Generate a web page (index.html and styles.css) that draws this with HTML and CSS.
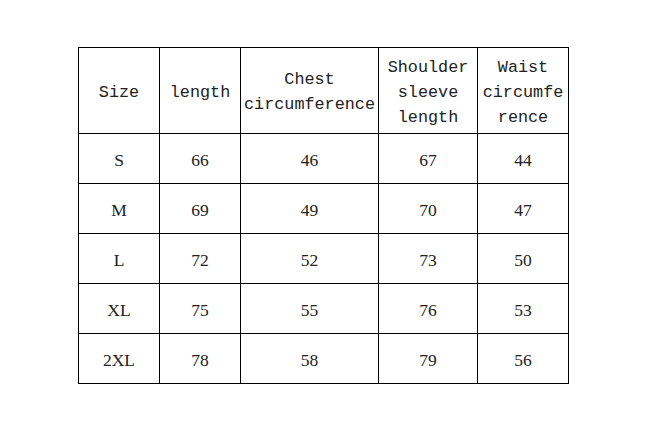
FILE: index.html
```html
<!DOCTYPE html>
<html>
<head>
<meta charset="utf-8">
<link rel="stylesheet" href="styles.css">
</head>
<body>
<table class="size-table">
  <colgroup>
    <col class="c1"><col class="c2"><col class="c3"><col class="c4"><col class="c5">
  </colgroup>
  <thead>
    <tr>
      <th>Size</th>
      <th>length</th>
      <th>Chest<br>circumference</th>
      <th>Shoulder<br>sleeve<br>length</th>
      <th>Waist<br>circumfe<br>rence</th>
    </tr>
  </thead>
  <tbody>
    <tr><td>S</td><td>66</td><td>46</td><td>67</td><td>44</td></tr>
    <tr><td>M</td><td>69</td><td>49</td><td>70</td><td>47</td></tr>
    <tr><td>L</td><td>72</td><td>52</td><td>73</td><td>50</td></tr>
    <tr><td>XL</td><td>75</td><td>55</td><td>76</td><td>53</td></tr>
    <tr><td>2XL</td><td>78</td><td>58</td><td>79</td><td>56</td></tr>
  </tbody>
</table>
</body>
</html>
```
FILE: styles.css
```css
html, body {
  margin: 0;
  background: #ffffff;
}
body {
  padding: 47px 0 0 78px;
}
.size-table {
  border-collapse: collapse;
  table-layout: fixed;
  width: 490px;
}
.c1 { width: 81px; }
.c2 { width: 81px; }
.c3 { width: 138px; }
.c4 { width: 99px; }
.c5 { width: 91px; }
.size-table th,
.size-table td {
  border: 1px solid #000;
  padding: 3px 0 0 0;
  text-align: center;
  vertical-align: middle;
  color: #222;
}
.size-table th {
  height: 82px;
  font-family: "Liberation Mono", monospace;
  font-weight: normal;
  font-size: 16.8px;
  line-height: 25px;
}
.size-table td {
  height: 46px;
  font-family: "Liberation Serif", serif;
  font-size: 17.5px;
  line-height: 20px;
}
```
